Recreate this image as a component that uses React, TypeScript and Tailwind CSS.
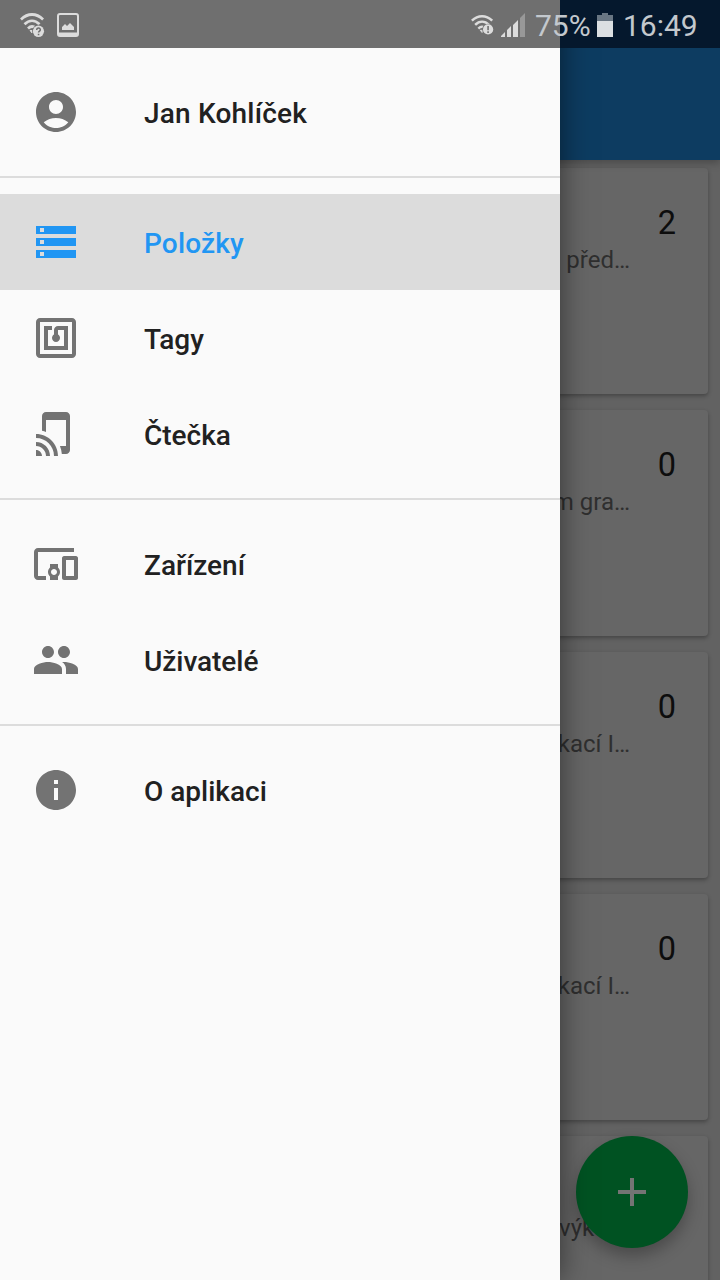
import React from "react";
import {
  MdAccountCircle,
  MdStorage,
  MdNfc,
  MdDevicesOther,
  MdPeople,
  MdInfo,
} from "react-icons/md";

const TapAndPlay = ({ className }: { className?: string }) => (
  <svg viewBox="0 0 24 24" className={className} fill="currentColor">
    <path d="M2 16v2c2.76 0 5 2.24 5 5h2c0-3.87-3.13-7-7-7zm0 4v3h3c0-1.66-1.34-3-3-3zm0-8v2c4.97 0 9 4.03 9 9h2c0-6.08-4.92-11-11-11zM17 1.01L7 1c-1.1 0-2 .9-2 2v7.37c.69.16 1.36.37 2 .64V5h10v13h-3.03c.52 1.25.84 2.59.95 4H17c1.1 0 2-.9 2-2V3c0-1.1-.9-1.99-2-1.99z" />
  </svg>
);

type RowProps = {
  icon: React.ComponentType<{ className?: string }>;
  label: string;
  active?: boolean;
  spacing?: string;
};

function Row({ icon: Icon, label, active, spacing = "tracking-normal" }: RowProps) {
  return (
    <div
      className={
        active
          ? "flex h-24 items-center gap-16 bg-[#dcdcdc] px-8 text-[#2196f3]"
          : "flex h-24 items-center gap-16 px-8 text-[#212121]"
      }
    >
      <Icon className={active ? "size-12" : "size-12 text-[#737373]"} />
      <span className={`pt-1 text-[28px] font-medium leading-8 ${spacing}`}>{label}</span>
    </div>
  );
}

const Divider = () => <div className="h-0.5 bg-[#dcdcdc]" />;

const cards = [
  { count: "2", text: "před…" },
  { count: "0", text: "m gra…" },
  { count: "0", text: "kací I…" },
  { count: "0", text: "kací I…" },
];

function WifiArcs() {
  return (
    <g fill="none" stroke="currentColor" strokeWidth="2.8">
      <path d="M1 6.5C8-.2 17-.2 24 6.5" />
      <path d="M4.7 11.3c4.8-4.7 10.8-4.7 15.6 0" />
      <path d="M8.3 15.5c2.7-2.6 5.7-2.6 8.4 0" />
      <path d="M10.5 17.5h4L12.5 20z" fill="currentColor" strokeWidth="1" />
    </g>
  );
}

function StatusBar() {
  return (
    <header className="z-10 col-start-1 row-start-1 flex h-12 self-start">
      <div className="flex w-[560px] items-center bg-[#6f6f6f] pt-0.5 text-[#dcdcdc]">
        <svg className="mt-0.5 ml-5 h-[26px] w-[25px]" viewBox="0 0 26 26" preserveAspectRatio="none">
          <WifiArcs />
          <circle cx="19.2" cy="18.3" r="6.6" fill="#6f6f6f" />
          <circle cx="19.2" cy="18.3" r="5.8" fill="currentColor" />
          <path d="M17.4 16.9c0-2.6 3.9-2.4 3.7 0-.1 1.2-1.8 1.2-1.8 2.7M19.3 20.7v1.6" fill="none" stroke="#6f6f6f" strokeWidth="1.6" />
        </svg>
        <svg className="ml-3 h-6 w-[22px]" viewBox="0 0 22 24">
          <rect x="1" y="1" width="20" height="22" rx="2" fill="none" stroke="currentColor" strokeWidth="2" />
          <path d="M1 19.5h20V23H1zM5 17v-3l3-3 2 2 3-3 4 4v3z" fill="currentColor" />
        </svg>
        <svg className="ml-[392px] h-[21px] w-[23px]" viewBox="0 0 26 24" preserveAspectRatio="none">
          <WifiArcs />
          <circle cx="19.3" cy="16.5" r="6.6" fill="#6f6f6f" />
          <circle cx="19.3" cy="16.5" r="5.8" fill="currentColor" />
          <path d="M19.3 12.5v5M19.3 18.5v2" stroke="#6f6f6f" strokeWidth="1.8" />
        </svg>
        <svg className="ml-[7px] h-6 w-6" viewBox="0 0 24 24">
          <path d="M0 24v-1l4-4v5zM6 24v-7l4-4v11zM12 24V12l5-5v17z" fill="currentColor" />
          <path d="M19 24V5l5-5v24z" fill="#989898" />
        </svg>
      </div>
      <div className="flex w-40 items-center bg-[#05182d] pt-0.5 text-[30px] text-[#c3c8cd]">
        <span className="relative -left-[25px] w-[56px] whitespace-nowrap pt-0.5 leading-8">75%</span>
        <svg className="-ml-[19px] h-6 w-4" viewBox="0 0 16 24">
          <path d="M5 0h6v2h5v6H0V2h5z" fill="#697683" />
          <path d="M0 8h16v16H0z" fill="#dbdfe2" />
        </svg>
        <span className="ml-2.5 pt-0.5 leading-8">16:49</span>
      </div>
    </header>
  );
}

export default function App() {
  return (
    <div
      className="grid h-[1280px] w-[720px] grid-cols-1 grid-rows-1 overflow-hidden bg-[#626262]"
      style={{ fontFamily: "Roboto, sans-serif" }}
    >
      <StatusBar />

      <main className="isolate col-start-1 row-start-1 flex h-[1280px] w-[170px] flex-col justify-self-end overflow-hidden">
        <div className="z-[1] h-40 shrink-0 bg-[#0d3c61] shadow-[0_3px_8px_rgba(0,0,0,0.25)]" />
        <div className="flex flex-col gap-4 pt-2 pr-3">
          {cards.map((card, i) => (
            <section
              key={i}
              className="flex h-[226px] shrink-0 flex-col rounded-r bg-[#666666] pt-9 shadow-[0_2px_4px_rgba(0,0,0,0.3)]"
            >
              <span className="self-end pr-8 pt-px text-[32.5px] leading-[37px] text-[#0d0d0d]">{card.count}</span>
              <div className="flex w-20 justify-end text-[24px] leading-9 text-[#2f2f2f]">
                <span className="whitespace-pre">{card.text}</span>
              </div>
            </section>
          ))}
          <section className="flex h-[226px] shrink-0 flex-col rounded-r bg-[#666666] pt-[74px] pl-[9px] shadow-[0_2px_4px_rgba(0,0,0,0.3)]">
            <span className="text-[24px] leading-9 text-[#2f2f2f]">výk</span>
          </section>
        </div>
      </main>

      <button className="z-[1] col-start-1 row-start-1 mr-8 mb-8 flex size-28 items-center justify-center self-end justify-self-end rounded-full bg-[#005222] shadow-[0_8px_16px_rgba(0,0,0,0.28)]">
        <svg viewBox="0 0 28 28" className="size-7" stroke="#747474" strokeWidth="4">
          <path d="M14 0v28M0 14h28" />
        </svg>
      </button>

      <nav className="z-[2] col-start-1 row-start-1 flex h-[1280px] w-[560px] flex-col bg-[#fafafa] pt-16 shadow-[0_0_28px_rgba(0,0,0,0.5)]">
        <Row icon={MdAccountCircle} label="Jan Kohlíček" spacing="tracking-[0.2px]" />
        <div className="py-4">
          <Divider />
        </div>
        <Row icon={MdStorage} label="Položky" active spacing="tracking-[0.15px]" />
        <Row icon={MdNfc} label="Tagy" />
        <Row icon={TapAndPlay} label="Čtečka" />
        <div className="py-4">
          <Divider />
        </div>
        <Row icon={MdDevicesOther} label="Zařízení" />
        <Row icon={MdPeople} label="Uživatelé" spacing="tracking-[-0.05px]" />
        <div className="py-4">
          <Divider />
        </div>
        <Row icon={MdInfo} label="O aplikaci" />
      </nav>
    </div>
  );
}
